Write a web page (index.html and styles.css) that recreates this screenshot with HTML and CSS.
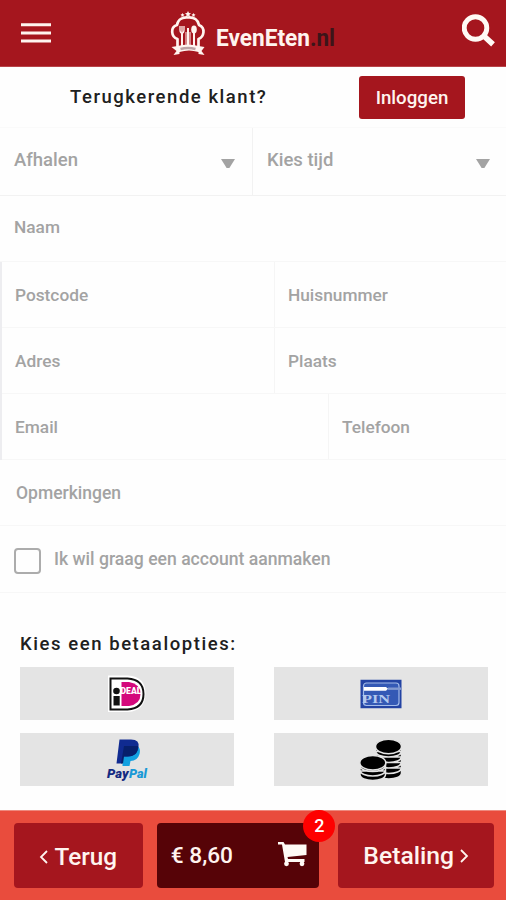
FILE: index.html
```html
<!DOCTYPE html>
<html lang="nl">
<head>
<meta charset="utf-8">
<title>EvenEten.nl</title>
<link rel="stylesheet" href="styles.css">
</head>
<body>
<header class="header">
  <svg class="menu" width="30" height="20" viewBox="0 0 30 20"><path d="M0 1.7h30M0 10h30M0 18h30" stroke="#fff4ef" stroke-width="2.9"/></svg>
  <svg class="brand" width="168" height="46" viewBox="0 0 168 46">
    <g fill="none" stroke="#fff4ef" stroke-width="2.700" stroke-linejoin="round">
      <path d="M7.500 37V28C1 26 0 16 7 14C8 8 13 6 18 6.500C24 6 28 9 29 14C36 17 34 26 28.500 28V37"/>
      <path d="M12 22v15M18 17v19M24 22v15" stroke-width="2"/>
      <path d="M10 15v4q0 3 2 3t2-3v-4M12 15v6" stroke-width="1.300"/>
      <path d="M16 21v15M20 21v15" stroke-width="1"/>
    </g>
    <g fill="#fff4ef">
      <ellipse cx="24" cy="18.500" rx="2.800" ry="4"/>
      <path d="M1.500 36l6-1q10.500-3 21 0l6 1-3 4 3 4-6-1v-2q-9.500-3-19 0v2l-6 1 3-4z"/>
      <path d="M18 0l1 2 2 .2-1.600 1.500.5 2-1.900-1-1.900 1 .5-2L15 2.200l2-.2zM12.500 2l.7 1.200 1.300.2-1 1 .2 1.400-1.200-.6-1.200.6.2-1.400-1-1 1.300-.2zM23.500 2l.7 1.200 1.300.2-1 1 .2 1.400-1.200-.6-1.200.6.2-1.400-1-1 1.300-.2z"/>
    </g>
    <path d="M10.500 38q7.500-2 15 0" stroke="#bda3a5" stroke-width="2.400" fill="none"/>
    <text class="brand-text" x="46" y="35" textLength="94" lengthAdjust="spacingAndGlyphs">EvenEten</text>
    <text class="brand-text brand-tld" x="140" y="35" textLength="25" lengthAdjust="spacingAndGlyphs">.nl</text>
  </svg>
  <svg class="search" width="34" height="34" viewBox="0 0 34 34"><circle cx="13.500" cy="15" r="11.300" fill="none" stroke="#fffaf5" stroke-width="4.900"/><path d="M22.500 23.500l6.500 6" stroke="#fffaf5" stroke-width="5.500" stroke-linecap="square"/></svg>
</header>
<main>
  <section class="login">
    <span class="login-question">Terugkerende klant?</span>
    <button class="login-button">Inloggen</button>
  </section>
  <form class="form">
    <div class="row selects">
      <div class="field select big">Afhalen<i class="arrow"></i></div>
      <div class="field select big">Kies tijd<i class="arrow"></i></div>
    </div>
    <div class="row"><div class="field name">Naam</div></div>
    <div class="marked">
      <div class="row split"><div class="field">Postcode</div><div class="field">Huisnummer</div></div>
      <div class="row split"><div class="field">Adres</div><div class="field">Plaats</div></div>
      <div class="row contact"><div class="field">Email</div><div class="field">Telefoon</div></div>
    </div>
    <div class="row"><div class="field remarks">Opmerkingen</div></div>
    <label class="row account"><span class="checkbox"></span><span class="account-label">Ik wil graag een account aanmaken</span></label>
  </form>
  <section class="payment">
    <h2 class="payment-title">Kies een betaalopties:</h2>
    <div class="options">
      <div class="option">
        <svg width="40" height="38" viewBox="0 0 40 38">
          <path d="M1 .5h20q17.500 1 17.500 18T21 37H1z" fill="#fff"/>
          <path d="M3.500 3.500h17q16 1 16 15.500t-16 15.500h-17z" fill="#fff" stroke="#111" stroke-width="2"/>
          <path d="M14.500 7H22q11.500 2 11.500 12T22 31h-7.500z" fill="#d4087c"/>
          <circle cx="9.500" cy="16" r="3.300" fill="#111"/><path d="M6.500 21h6.200v9.500H6.500z" fill="#111"/>
          <text class="ideal-text" x="13.500" y="19" textLength="21" lengthAdjust="spacingAndGlyphs">DEAL</text>
        </svg>
      </div>
      <div class="option">
        <svg width="42" height="30" viewBox="0 0 42 30">
          <path d="M.5.800h41v28.400H.5z" fill="#2343a3"/>
          <rect x="3.500" y="4" width="35.500" height="22.500" rx="3" fill="#3459b5" stroke="#a4bce9" stroke-width="1.200"/>
          <path d="M4 8h22l2 1.700-2 2H4z" fill="#fff"/><path d="M28 9.700h13" stroke="#8299d0" stroke-width="2.400"/>
          <text class="pin-text" x="2" y="24" textLength="28" lengthAdjust="spacingAndGlyphs">PIN</text>
        </svg>
      </div>
      <div class="option">
        <svg width="44" height="44" viewBox="0 0 44 44">
          <path d="M18 8h14q4 2 2.500 8-2 7-9 7l-1 5h-7z" fill="#12a0e0"/>
          <path d="M14.500 1.500H26q9 0 7.500 8-1.500 9-11.500 9h-4l-1 7h-5.500z" fill="#102b91"/>
          <path d="M19 8h14q.5 10-10 10.500h-4l-1 7h-2z" fill="#07206c"/>
          <text class="paypal-text" x="2" y="40" textLength="21.500" lengthAdjust="spacingAndGlyphs" fill="#142b82">Pay</text>
          <text class="paypal-text" x="24" y="40" textLength="18" lengthAdjust="spacingAndGlyphs" fill="#1999d6">Pal</text>
        </svg>
      </div>
      <div class="option">
        <svg width="44" height="44" viewBox="0 0 44 44">
          <g stroke="#e4e4e4" stroke-width="1.500">
            <path d="M17 30v5c0 8 25.500 8 25.500 0v-5zM17 24.500v5c0 8 25.500 8 25.500 0v-5zM17 19v5c0 8 25.500 8 25.500 0v-5zM17 13.500v5c0 8 25.500 8 25.500 0v-5zM16.500 8.500v4.500c0 8 26 8 26 0V8.500z"/>
            <ellipse cx="29.500" cy="8.500" rx="13" ry="7.300"/>
            <path d="M1 33v3.500c0 8 25.500 8 25.500 0V33zM1 28v4c0 8 25.500 8 25.500 0v-4zM1 25v2.500c0 8 25.500 8 25.500 0V25z"/>
            <ellipse cx="13.800" cy="24.800" rx="13" ry="7.300"/>
          </g>
        </svg>
      </div>
    </div>
  </section>
</main>
<footer class="footer">
  <button class="action back"><svg width="9" height="14" viewBox="0 0 9 14"><path d="M8 1L2 7l6 6" fill="none" stroke="#fff4ef" stroke-width="1.800"/></svg>Terug</button>
  <div class="cart"><span class="total">€ 8,60</span>
    <svg class="cart-icon" width="29" height="26" viewBox="0 0 29 26"><path d="M0 1h5.500L7 3.500h21.500V14L9.500 16l.5 2h16.500v3H7L4 3.500H0z" fill="#fffaf5"/><circle cx="8.500" cy="22.800" r="2.400" fill="#fffaf5"/><circle cx="24" cy="22.800" r="2.400" fill="#fffaf5"/></svg>
    <span class="badge">2</span>
  </div>
  <button class="action next">Betaling<svg width="9" height="14" viewBox="0 0 9 14"><path d="M1 1l6 6-6 6" fill="none" stroke="#fff4ef" stroke-width="1.800"/></svg></button>
</footer>
</body>
</html>
```

FILE: styles.css
```css
* { box-sizing: border-box; }
body {
  margin: 0;
  height: 900px;
  display: flex;
  flex-direction: column;
  background: #fefefe;
  color: #202020;
  font-family: Roboto, "Liberation Sans", sans-serif;
  font-weight: 500;
}
button { border: 0; padding: 0; font: inherit; color: #fff4ef; background: #a5161e; }
.header {
  height: 67px;
  background: #a5161e;
  border-bottom: 1px solid #b84449;
  display: flex;
  align-items: flex-start;
  padding: 11px 10px 0 21px;
}
.menu { margin-top: 12px; }
.brand { margin-left: 119px; overflow: visible; }
.brand-text { font-size: 23px; font-weight: 700; fill: #fff4ef; }
.brand-tld { fill: #3c1519; }
.search { margin-left: auto; margin-top: 2px; }
.login { height: 60px; display: flex; align-items: flex-start; padding: 9px 41px 0 70px; justify-content: space-between; }
.login-question { font-size: 18.500px; letter-spacing: 1.530px; line-height: 43px; }
.login-button { width: 106px; height: 43px; border-radius: 3px; font-size: 18.700px; }
.row { height: 66px; display: flex; border-bottom: 1px solid #f7f7f7; }
.field { color: #a3a3a3; font-size: 17.300px; padding-left: 14px; line-height: 67px; flex: 1; }
.selects { height: 69px; border-top: 1px solid #fafafa; border-bottom-color: #f2f2f2; }
.select { display: flex; justify-content: space-between; padding-right: 17px; }
.select:first-child { flex: none; width: 252px; }
.select + .select { border-left: 1px solid #f2f2f2; padding-right: 16px; }
.field.big { font-size: 18.500px; line-height: 65px; }
.field.name { line-height: 63px; }
.arrow { width: 14px; height: 9px; margin-top: 31px; background: #a3a3a3; clip-path: polygon(0 0, 100% 0, 60% 100%, 40% 100%); }
.marked { border-left: 2px solid #ededf0; }
.marked .field { padding-left: 13px; }
.marked .field:first-child { flex: none; width: 272px; }
.marked .field + .field { border-left: 1px solid #f5f5f5; }
.marked .contact .field:first-child { width: 326px; }
.field.remarks { padding-left: 16px; font-size: 17.500px; line-height: 66px; }
.account { height: 67px; padding-left: 14px; align-items: flex-start; }
.checkbox { width: 27px; height: 26px; border: 2px solid #acacac; border-radius: 4px; margin-top: 22px; }
.account-label { font-size: 17.600px; color: #a3a3a3; margin-left: 13px; line-height: 66px; }
.payment { padding: 0 18px 0 20px; }
.payment-title { margin: 0; padding-top: 38px; height: 74px; font-size: 18.500px; font-weight: 500; line-height: 26px; letter-spacing: 1.560px; }
.options { display: grid; grid-template-columns: 214px 214px; column-gap: 40px; row-gap: 13px; }
.option { height: 53px; background: #e4e4e4; display: flex; align-items: center; justify-content: center; }
.ideal-text { font-size: 8.500px; font-weight: 900; fill: #fff; }
.pin-text { font: 700 13.500px "Liberation Serif", serif; fill: #b4caee; }
.paypal-text { font-size: 13px; font-weight: 900; font-style: italic; }
.footer { height: 90px; margin-top: auto; border-top: 1px solid #ee8a7f; background: #e94c3d; padding: 12px 12px 0 14px; display: flex; }
.action { height: 65px; border-radius: 4px; font-size: 24.700px; display: flex; align-items: center; justify-content: center; gap: 7px; }
.back { width: 129px; padding: 2px 1px 0 0; font-size: 24.300px; }
.next { width: 156px; margin-left: 19px; gap: 6px; }
.cart { position: relative; width: 163px; height: 65px; margin-left: 14px; border-radius: 4px; background: #560307; color: #fff4ef; padding: 0 12px 0 14px; display: flex; justify-content: space-between; align-items: center; }
.total { font-size: 22.700px; margin-top: -1px; }
.cart-icon { margin-top: -3px; }
.badge { position: absolute; top: -13px; right: -16px; width: 32px; height: 32px; border-radius: 50%; background: #fe0000; color: #fff; font-size: 18px; line-height: 32px; text-align: center; }
```
